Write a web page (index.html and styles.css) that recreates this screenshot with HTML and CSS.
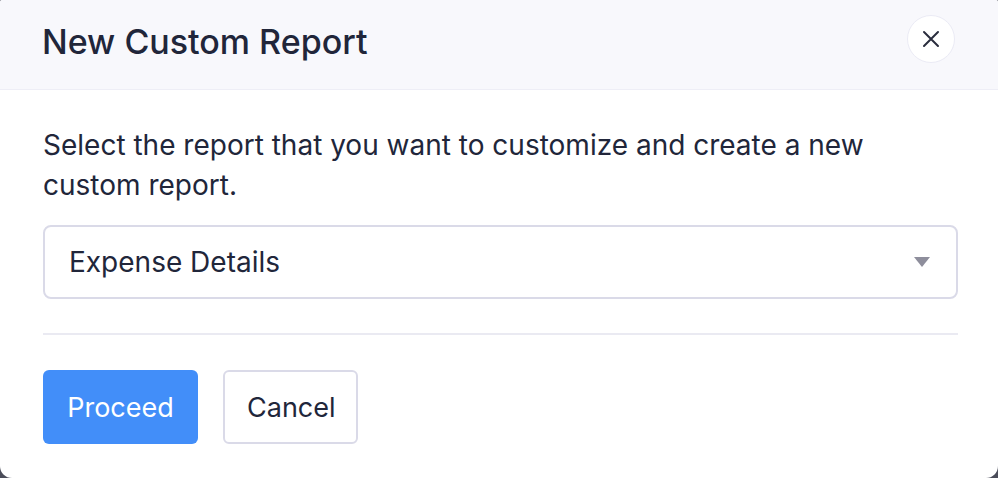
FILE: index.html
```html
<!DOCTYPE html>
<html>
<head>
<meta charset="utf-8">
<link rel="stylesheet" href="styles.css">
</head>
<body>
<div class="modal">
  <div class="modal-header">
    <h1 class="modal-title">New Custom Report</h1>
    <button class="close-btn" aria-label="Close">
      <svg width="18" height="18" viewBox="0 0 18 18"><path d="M2 2 L16 16 M16 2 L2 16" stroke="#2a2d3e" stroke-width="2" stroke-linecap="round"/></svg>
    </button>
  </div>
  <div class="modal-body">
    <p class="intro">Select the report that you want to customize and create a new custom report.</p>
    <div class="select">
      <span class="select-value">Expense Details</span>
      <span class="caret"></span>
    </div>
    <div class="divider"></div>
    <div class="actions">
      <button class="btn btn-primary">Proceed</button>
      <button class="btn btn-secondary">Cancel</button>
    </div>
  </div>
</div>
</body>
</html>
```

FILE: styles.css
```css
html, body {
  margin: 0;
  padding: 0;
  background: #4b4d5a;
}
body {
  font-family: Inter, "Noto Sans", sans-serif;
  color: #21263a;
}
.modal {
  width: 998px;
  height: 478px;
  background: #ffffff;
  border-radius: 2px 2px 12px 12px;
  overflow: hidden;
}
.modal-header {
  height: 89px;
  background: #f8f8fc;
  border-bottom: 1px solid #eeeef6;
  display: flex;
  align-items: center;
  justify-content: space-between;
  padding: 0 43px 0 42px;
}
.modal-title {
  margin: -6px 0 0 0;
  font-size: 34px;
  font-weight: 500;
  color: #21263a;
  letter-spacing: 0;
}
.close-btn {
  width: 48px;
  height: 48px;
  border-radius: 50%;
  background: #ffffff;
  border: 1.5px solid #ebebf5;
  display: flex;
  align-items: center;
  justify-content: center;
  padding: 0;
  margin-top: -11px;
  cursor: pointer;
}
.modal-body {
  padding: 35px 40px 0 43px;
}
.intro {
  margin: 0;
  font-size: 28px;
  line-height: 40px;
  width: 880px;
}
.select {
  margin-top: 20px;
  height: 70px;
  border: 2px solid #dadae8;
  border-radius: 8px;
  display: flex;
  align-items: center;
  justify-content: space-between;
  padding: 0 26px 0 24px;
}
.select-value {
  font-size: 28px;
}
.caret {
  width: 0;
  height: 0;
  border-left: 8px solid transparent;
  border-right: 8px solid transparent;
  border-top: 10px solid #8e8e9c;
}
.divider {
  margin-top: 34px;
  height: 2px;
  background: #eaeaf2;
}
.actions {
  margin-top: 35px;
  display: flex;
  gap: 25px;
}
.btn {
  height: 74px;
  font-family: Inter, "Noto Sans", sans-serif;
  font-size: 27px;
  border-radius: 6px;
  padding: 0 22px;
  cursor: pointer;
}
.btn-primary {
  background: #428ef9;
  color: #ffffff;
  border: none;
  width: 155px;
}
.btn-secondary {
  background: #ffffff;
  color: #21263a;
  border: 2px solid #dadae8;
  width: 135px;
}
```
